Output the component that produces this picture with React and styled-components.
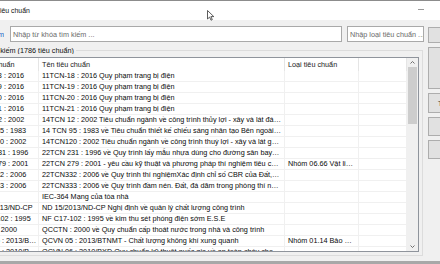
import React from "react";
import styled, { createGlobalStyle } from "styled-components";

const GlobalStyle = createGlobalStyle`
  html, body {
    margin: 0;
    padding: 0;
  }
  body {
    width: 440px;
    height: 264px;
    overflow: hidden;
    background: #f0f0f0;
    font-family: "Liberation Sans", Arial, sans-serif;
  }
`;

const Window = styled.div`
  position: relative;
  width: 440px;
  height: 264px;
  overflow: hidden;
  display: flex;
  flex-direction: column;
  background: #f0f0f0;
  font-size: 7.25px;
  color: #111;
`;

const TitleBar = styled.div`
  height: 19px;
  flex: none;
  background: #fff;
  border-top: 1px solid #8c8c8c;
  display: flex;
  align-items: center;
  justify-content: space-between;
`;

const TitleText = styled.span`
  margin-left: -4px;
  font-size: 6.9px;
  white-space: nowrap;
  color: #111;
`;

const MinDash = styled.span`
  width: 6px;
  height: 1px;
  background: #9a9a9a;
  margin-right: 16px;
  margin-top: -3px;
`;

const Body = styled.div`
  flex: 1;
  display: flex;
  min-height: 0;
`;

const LeftPane = styled.div`
  width: 424px;
  flex: none;
  display: flex;
  flex-direction: column;
`;

const SearchRow = styled.div`
  margin-top: 6px;
  height: 16px;
  display: flex;
  align-items: stretch;
`;

const Clip = styled.div`
  width: ${p => p.$w}px;
  flex: none;
  overflow: hidden;
  display: flex;
  justify-content: flex-end;
  align-items: center;
  white-space: nowrap;
  color: ${p => p.$color || "inherit"};
`;

const TextBox = styled.div`
  width: ${p => p.$w}px;
  flex: none;
  box-sizing: border-box;
  margin-left: ${p => p.$ml}px;
  background: #fff;
  border: 1px solid #a9a9a9;
  display: flex;
  align-items: center;
  padding-left: 2px;
  overflow: hidden;
  white-space: nowrap;
  color: #6a6a6a;
`;

const GroupHead = styled.div`
  margin-top: 4px;
  height: 8px;
  display: flex;
  margin-right: 1px;
`;

const HeadLine = styled.div`
  flex: 1;
  margin-left: 2px;
  margin-top: 4px;
  border-top: 1px solid #dcdcdc;
  border-right: 1px solid #dcdcdc;
`;

const GroupBody = styled.div`
  margin-right: 1px;
  border-right: 1px solid #dcdcdc;
  border-bottom: 1px solid #dcdcdc;
  padding: 3px 3px 3px 0;
`;

const ListView = styled.div`
  margin-left: -35px;
  height: 195px;
  box-sizing: border-box;
  border: 1px solid #8f949c;
  background: #fff;
  display: flex;
  overflow: hidden;
`;

const Table = styled.div`
  flex: 1;
  display: flex;
  flex-direction: column;
  overflow: hidden;
`;

const HeaderRow = styled.div`
  height: 13px;
  flex: none;
  display: flex;
`;

const Row = styled.div`
  height: 11px;
  flex: none;
  display: flex;
  box-sizing: border-box;
  border-bottom: 1px solid #f0f0f0;
`;

const Cell = styled.div`
  box-sizing: border-box;
  width: ${p => (p.$w ? `${p.$w}px` : "auto")};
  flex: ${p => (p.$w ? "none" : "1")};
  border-right: 1px solid ${p => (p.$head ? "#e5e5e5" : "#f0f0f0")};
  padding: 0 ${p => p.$pr ?? 3}px 0 3px;
  line-height: ${p => (p.$head ? 13 : 10)}px;
  white-space: nowrap;
  overflow: hidden;
  text-overflow: ellipsis;
  color: ${p => (p.$head ? "#1a1a1a" : "#0a0a0a")};
`;

const ScrollBar = styled.div`
  width: 11px;
  flex: none;
  background: #f0f0f0;
  display: flex;
  flex-direction: column;
  align-items: center;
`;

const ArrowBox = styled.div`
  height: 9px;
  width: 100%;
  display: flex;
  align-items: center;
  justify-content: center;
`;

const Thumb = styled.div`
  width: 9px;
  height: 57px;
  background: #cdcdcd;
`;

const Track = styled.div`
  flex: 1;
`;

const ButtonCol = styled.div`
  margin-left: 4px;
  padding-top: 7px;
  display: flex;
  flex-direction: column;
  gap: 4px;
`;

const SideButton = styled.div`
  width: 22px;
  height: ${p => p.$h}px;
  box-sizing: border-box;
  background: #e1e1e1;
  border: 1px solid #adadad;
  display: flex;
  align-items: center;
  padding-left: 9px;
  white-space: nowrap;
  overflow: hidden;
  color: #333;
`;

const BottomEdge = styled.div`
  height: 3px;
  flex: none;
  background: #a8a8a8;
`;

const Cursor = styled.svg`
  position: absolute;
  left: 207px;
  top: 10px;
`;

const Chevron = ({ up }) => (
  <svg width="5" height="3" viewBox="0 0 5 3">
    <polyline
      points={up ? "0.5,2.5 2.5,0.5 4.5,2.5" : "0.5,0.5 2.5,2.5 4.5,0.5"}
      fill="none"
      stroke="#606060"
      strokeWidth="0.9"
    />
  </svg>
);

const rows = [
  ["11TCN-18 : 2016", "11TCN-18 : 2016 Quy phạm trang bị điện", ""],
  ["11TCN-19 : 2016", "11TCN-19 : 2016 Quy phạm trang bị điện", ""],
  ["11TCN-20 : 2016", "11TCN-20 : 2016 Quy phạm trang bị điện", ""],
  ["11TCN-21 : 2016", "11TCN-21 : 2016 Quy phạm trang bị điện", ""],
  ["14TCN 12 : 2002", "14TCN 12 : 2002 Tiêu chuẩn ngành về công trình thủy lợi - xây và lát đá - yêu cầu kỹ thuật thi công và nghiệm thu", ""],
  ["14 TCN 95 : 1983", "14 TCN 95 : 1983 về Tiêu chuẩn thiết kế chiếu sáng nhân tạo Bên ngoài công trình xây dựng dân dụng", ""],
  ["14TCN120 : 2002", "14TCN120 : 2002 Tiêu chuẩn ngành về công trình thuỷ lợi - xây và lát gạch - yêu cầu kỹ thuật", ""],
  ["22TCN 231 : 1996", "22TCN 231 : 1996 về Quy trình lấy mẫu nhựa dùng cho đường sân bay và bến bãi", ""],
  ["22TCN 279 : 2001", "22TCN 279 : 2001 - yêu cầu kỹ thuật và phương pháp thí nghiệm tiêu chuẩn vật liệu nhựa đường", "Nhóm 06.66 Vật liệu xây dựng"],
  ["22TCN332 : 2006", "22TCN332 : 2006 về Quy trình thí nghiệmXác định chỉ số CBR của Đất, đá dăm trong phòng thí nghiệm", ""],
  ["22TCN333 : 2006", "22TCN333 : 2006 về Quy trình đầm nén. Đất, đá dăm trong phòng thí nghiệm", ""],
  ["", "IEC-364 Mạng của tòa nhà", ""],
  ["ND 15/2013/ND-CP", "ND 15/2013/ND-CP Nghị định về quản lý chất lượng công trình", ""],
  ["NF C17-102 : 1995", "NF C17-102 : 1995 về kim thu sét phóng điện sớm E.S.E", ""],
  ["QCCTN : 2000", "QCCTN : 2000 về Quy chuẩn cấp thoát nước trong nhà và công trình", ""],
  ["QCVN 05 : 2013/BTNMT", "QCVN 05 : 2013/BTNMT - Chất lượng không khí xung quanh", "Nhóm 01.14 Bảo vệ môi trường"],
  ["QCVN 06 : 2010/BXD", "QCVN 06 : 2010/BXD Quy chuẩn kỹ thuật quốc gia về an toàn cháy cho nhà và công trình", ""],
];

export default function App() {
  return (
    <>
      <GlobalStyle />
      <Window>
        <TitleBar>
          <TitleText>Tiêu chuẩn</TitleText>
          <MinDash />
        </TitleBar>
        <Body>
          <LeftPane>
            <SearchRow>
              <Clip $w={4} $color="#1a5fc8">Tìm</Clip>
              <TextBox $w={332} $ml={6}>Nhập từ khóa tìm kiếm ...</TextBox>
              <TextBox $w={77} $ml={5}>Nhập loại tiêu chuẩn ...</TextBox>
            </SearchRow>
            <GroupHead>
              <Clip $w={74}>Kết quả tìm kiếm (1786 tiêu chuẩn)</Clip>
              <HeadLine />
            </GroupHead>
            <GroupBody>
              <ListView>
                <Table>
                  <HeaderRow>
                    <Cell $head $w={73}>Mã tiêu chuẩn</Cell>
                    <Cell $head $w={246}>Tên tiêu chuẩn</Cell>
                    <Cell $head $w={74}>Loại tiêu chuẩn</Cell>
                    <Cell $head />
                  </HeaderRow>
                  {rows.map((r, i) => (
                    <Row key={i}>
                      <Cell $w={73} $pr={0}>{r[0]}</Cell>
                      <Cell $w={246}>{r[1]}</Cell>
                      <Cell $w={74}>{r[2]}</Cell>
                      <Cell />
                    </Row>
                  ))}
                </Table>
                <ScrollBar>
                  <ArrowBox><Chevron up /></ArrowBox>
                  <Thumb />
                  <Track />
                  <ArrowBox><Chevron /></ArrowBox>
                </ScrollBar>
              </ListView>
            </GroupBody>
          </LeftPane>
          <ButtonCol>
            <SideButton $h={16} />
            <SideButton $h={42} />
            <SideButton $h={20}>Thêm</SideButton>
            <SideButton $h={19} />
            <SideButton $h={19} />
          </ButtonCol>
        </Body>
        <BottomEdge />
        <Cursor width="8" height="11" viewBox="0 0 8 11">
          <path d="M0.5 0.5 L0.5 9 L2.6 7.1 L4 10.2 L5.3 9.6 L3.9 6.6 L6.8 6.6 Z" fill="#fff" stroke="#333" strokeWidth="0.8" strokeLinejoin="round" />
        </Cursor>
      </Window>
    </>
  );
}
